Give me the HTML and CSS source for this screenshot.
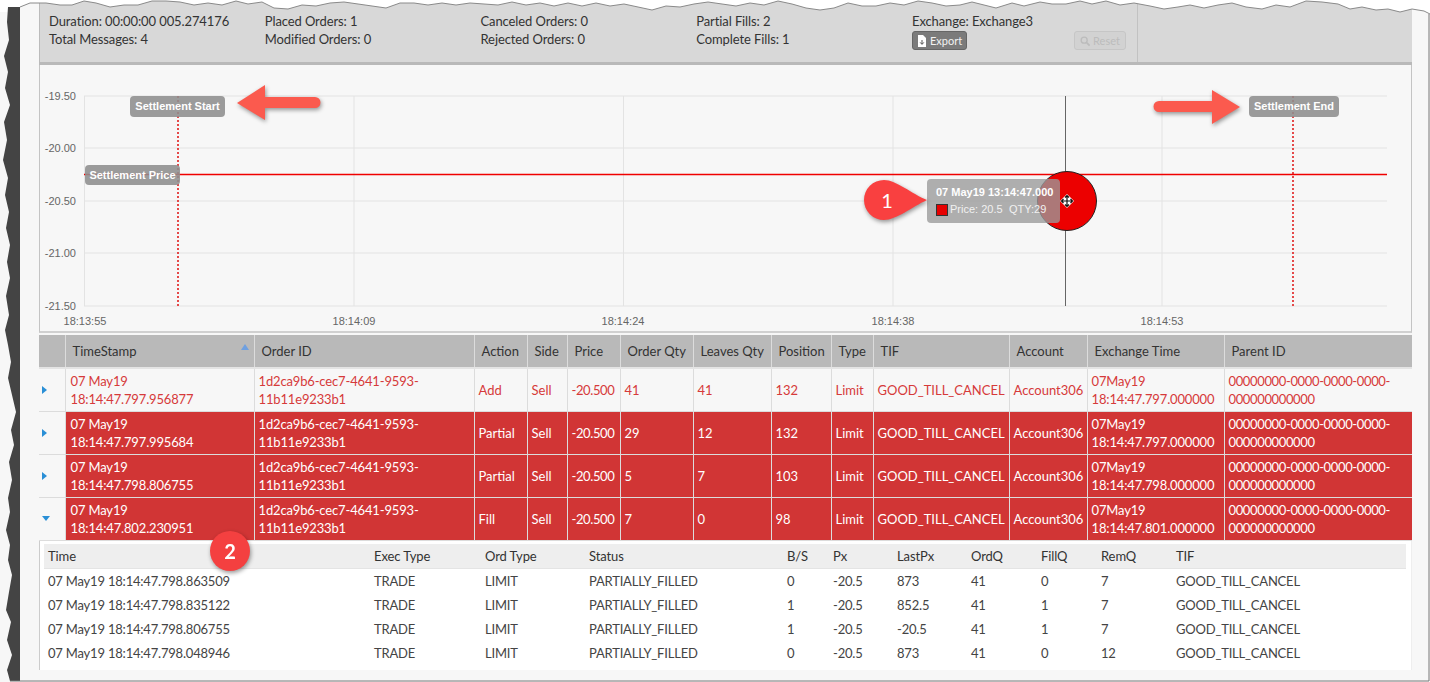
FILE: index.html
```html
<!DOCTYPE html>
<html lang="en">
<head>
  <meta charset="UTF-8" />
  <title>Order Timeline</title>
  <link rel="stylesheet" href="styles.css">
</head>
<body>
  <div class="shot">
    <div class="panel">
      <div class="summary">
        <div class="stat"><p>Duration: 00:00:00 005.274176</p><p>Total Messages: 4</p></div>
        <div class="stat"><p>Placed Orders: 1</p><p>Modified Orders: 0</p></div>
        <div class="stat"><p>Canceled Orders: 0</p><p>Rejected Orders: 0</p></div>
        <div class="stat"><p>Partial Fills: 2</p><p>Complete Fills: 1</p></div>
        <div class="stat stat-actions">
          <p>Exchange: Exchange3</p>
          <div class="actions">
            <button class="btn btn-export">
              <svg class="btn-icon" viewBox="0 0 10 12"><path d="M1 0h5l3 3v9H1z" fill="#fff"/><path d="M5 5v4M3.2 7.4 5 9.4l1.800-2" stroke="#555" fill="none"/></svg>
              Export
            </button>
            <button class="btn btn-reset">
              <svg class="btn-icon" viewBox="0 0 12 12"><circle cx="5" cy="5" r="3.600" fill="none" stroke="#bcbcbc" stroke-width="1.600"/><path d="m8 8 3.500 3.500" stroke="#bcbcbc" stroke-width="2"/></svg>
              Reset
            </button>
          </div>
        </div>
      </div>

      <svg class="chart" viewBox="1 0 1371 266">
        <g class="grid">
          <path d="M45 31H1348M45 83H1348M45 136H1348M45 188H1348M45 241H1348"/>
          <path d="M45.500 31V241M315 31V241M584.500 31V241M854 31V241M1123 31V241"/>
        </g>
        <g class="axis">
          <text x="37" y="35" text-anchor="end">-19.50</text>
          <text x="37" y="87" text-anchor="end">-20.00</text>
          <text x="37" y="140" text-anchor="end">-20.50</text>
          <text x="37" y="192" text-anchor="end">-21.00</text>
          <text x="37" y="245" text-anchor="end">-21.50</text>
          <text x="46" y="260" text-anchor="middle">18:13:55</text>
          <text x="315" y="260" text-anchor="middle">18:14:09</text>
          <text x="584" y="260" text-anchor="middle">18:14:24</text>
          <text x="854" y="260" text-anchor="middle">18:14:38</text>
          <text x="1123" y="260" text-anchor="middle">18:14:53</text>
        </g>
        <path class="price-line" d="M45 109.500H1348"/>
        <path class="marker-line" d="M139 31V241M1254 31V241"/>
        <path class="cross-line" d="M1026.500 31V241"/>
        <circle class="point" cx="1028" cy="136" r="29.500"/>

        <rect class="flag" x="91" y="31" width="95" height="21" rx="4"/>
        <text class="flag-text" x="138.500" y="44.500" text-anchor="middle">Settlement Start</text>
        <rect class="flag" x="46" y="100" width="95" height="20" rx="4"/>
        <text class="flag-text" x="93.500" y="113.500" text-anchor="middle">Settlement Price</text>
        <rect class="flag" x="1210" y="31" width="90" height="21" rx="4"/>
        <text class="flag-text" x="1255" y="44.500" text-anchor="middle">Settlement End</text>

        <rect class="tip" x="888" y="114" width="133" height="44" rx="4"/>
        <text class="tip-title" x="897" y="131">07 May19 13:14:47.000</text>
        <rect class="tip-swatch" x="897.500" y="139.500" width="11" height="11"/>
        <text class="tip-text" x="911" y="148">Price: 20.5</text>
        <text class="tip-text" x="970" y="148">QTY:29</text>

        <path class="cursor-back" d="M1028 129l7 7-7 7-7-7z"/>
        <path class="cursor" d="M1028 131v10M1023 136h10M1026 132.500l2-2 2 2M1026 139.500l2 2 2-2M1024.500 134l-2 2 2 2M1031.500 134l2 2-2 2"/>

        <path class="callout-arrow" d="M198 38 226 20V32H276a5.500 5.500 0 0 1 0 11H226V55z"/>
        <path class="callout-arrow" d="M1201 42 1173 25V36H1120a5.500 5.500 0 0 0 0 11H1173V59z"/>
        <path class="callout-pin" d="M845 115c12 0 28 14 43 20-15 7-31 20-43 20a20 20 0 0 1 0-40z"/>
        <text class="callout-num" x="848" y="143" text-anchor="middle">1</text>
      </svg>

      <table class="orders">
        <colgroup>
          <col class="c-exp"><col class="c-stamp"><col class="c-id"><col class="c-action"><col class="c-side"><col class="c-price"><col class="c-oqty"><col class="c-lqty"><col class="c-pos"><col class="c-type"><col class="c-tif"><col class="c-acct"><col class="c-xtime"><col class="c-parent">
        </colgroup>
        <thead>
          <tr><th></th><th class="sorted">TimeStamp</th><th>Order ID</th><th>Action</th><th>Side</th><th>Price</th><th>Order Qty</th><th>Leaves Qty</th><th>Position</th><th>Type</th><th>TIF</th><th>Account</th><th>Exchange Time</th><th>Parent ID</th></tr>
        </thead>
        <tbody>
          <tr class="row-open">
            <td class="exp"><span class="caret"></span></td><td>07 May19<br>18:14:47.797.956877</td><td>1d2ca9b6-cec7-4641-9593-<br>11b11e9233b1</td><td>Add</td><td>Sell</td><td>-20.500</td><td>41</td><td>41</td><td>132</td><td>Limit</td><td>GOOD_TILL_CANCEL</td><td>Account306</td><td>07May19<br>18:14:47.797.000000</td><td>00000000-0000-0000-0000-<br>000000000000</td>
          </tr>
          <tr class="row-hit">
            <td class="exp"><span class="caret"></span></td><td>07 May19<br>18:14:47.797.995684</td><td>1d2ca9b6-cec7-4641-9593-<br>11b11e9233b1</td><td>Partial</td><td>Sell</td><td>-20.500</td><td>29</td><td>12</td><td>132</td><td>Limit</td><td>GOOD_TILL_CANCEL</td><td>Account306</td><td>07May19<br>18:14:47.797.000000</td><td>00000000-0000-0000-0000-<br>000000000000</td>
          </tr>
          <tr class="row-hit">
            <td class="exp"><span class="caret"></span></td><td>07 May19<br>18:14:47.798.806755</td><td>1d2ca9b6-cec7-4641-9593-<br>11b11e9233b1</td><td>Partial</td><td>Sell</td><td>-20.500</td><td>5</td><td>7</td><td>103</td><td>Limit</td><td>GOOD_TILL_CANCEL</td><td>Account306</td><td>07May19<br>18:14:47.798.000000</td><td>00000000-0000-0000-0000-<br>000000000000</td>
          </tr>
          <tr class="row-hit">
            <td class="exp"><span class="caret caret-down"></span></td><td>07 May19<br>18:14:47.802.230951</td><td>1d2ca9b6-cec7-4641-9593-<br>11b11e9233b1</td><td>Fill</td><td>Sell</td><td>-20.500</td><td>7</td><td>0</td><td>98</td><td>Limit</td><td>GOOD_TILL_CANCEL</td><td>Account306</td><td>07May19<br>18:14:47.801.000000</td><td>00000000-0000-0000-0000-<br>000000000000</td>
          </tr>
        </tbody>
      </table>

      <div class="detail">
        <table class="execs">
          <colgroup>
            <col class="e-time"><col class="e-type"><col class="e-ord"><col class="e-status"><col class="e-bs"><col class="e-px"><col class="e-last"><col class="e-oq"><col class="e-fq"><col class="e-rq"><col class="e-tif">
          </colgroup>
          <thead>
            <tr><th>Time</th><th>Exec Type</th><th>Ord Type</th><th>Status</th><th>B/S</th><th>Px</th><th>LastPx</th><th>OrdQ</th><th>FillQ</th><th>RemQ</th><th>TIF</th></tr>
          </thead>
          <tbody>
            <tr><td>07 May19 18:14:47.798.863509</td><td>TRADE</td><td>LIMIT</td><td>PARTIALLY_FILLED</td><td>0</td><td>-20.5</td><td>873</td><td>41</td><td>0</td><td>7</td><td>GOOD_TILL_CANCEL</td></tr>
            <tr><td>07 May19 18:14:47.798.835122</td><td>TRADE</td><td>LIMIT</td><td>PARTIALLY_FILLED</td><td>1</td><td>-20.5</td><td>852.5</td><td>41</td><td>1</td><td>7</td><td>GOOD_TILL_CANCEL</td></tr>
            <tr><td>07 May19 18:14:47.798.806755</td><td>TRADE</td><td>LIMIT</td><td>PARTIALLY_FILLED</td><td>1</td><td>-20.5</td><td>-20.5</td><td>41</td><td>1</td><td>7</td><td>GOOD_TILL_CANCEL</td></tr>
            <tr><td>07 May19 18:14:47.798.048946</td><td>TRADE</td><td>LIMIT</td><td>PARTIALLY_FILLED</td><td>0</td><td>-20.5</td><td>873</td><td>41</td><td>0</td><td>12</td><td>GOOD_TILL_CANCEL</td></tr>
          </tbody>
        </table>
      </div>
    </div>

    <div class="badge">2</div>

    <!-- torn screenshot edge, sits over everything -->
    <svg class="torn" viewBox="0 0 1430 682" width="1430" height="682">
      <path class="torn-paper" d="M0 0H1430V14L1424 11 1412 9 1400 12 1388 9 1376 10 1362 7 1350 9 1338 4 1322 2 1306 1 1290 7 1276 5 1262 9 1246 7 1232 3 1218 5 1204 8 1190 5 1178 7 1164 9 1150 6 1134 3 1120 5 1106 1 1092 4 1080 1 1066 4 1052 4 1040 2 1024 6 1012 3 996 8 984 5 972 2 960 5 946 6 932 3 918 1 904 5 890 3 876 6 862 6 848 3 834 8 820 10 806 8 792 4 778 1 764 5 750 3 736 6 722 4 708 2 694 4 680 7 666 6 652 10 638 7 624 4 610 6 596 3 582 6 568 3 554 6 540 3 526 5 512 2 498 5 484 4 470 3 456 5 442 3 428 5 414 3 400 3 386 8 372 6 358 4 344 2 330 3 316 6 302 5 288 9 274 8 262 2 248 4 236 1 222 5 208 3 194 5 180 2 166 1 152 1 138 5 124 5 110 7 96 3 84 1 72 5 60 5 46 3 30 3 20 7 8 12 0 12z"/>
      <path class="torn-line" d="M1430 14 1424 11 1412 9 1400 12 1388 9 1376 10 1362 7 1350 9 1338 4 1322 2 1306 1 1290 7 1276 5 1262 9 1246 7 1232 3 1218 5 1204 8 1190 5 1178 7 1164 9 1150 6 1134 3 1120 5 1106 1 1092 4 1080 1 1066 4 1052 4 1040 2 1024 6 1012 3 996 8 984 5 972 2 960 5 946 6 932 3 918 1 904 5 890 3 876 6 862 6 848 3 834 8 820 10 806 8 792 4 778 1 764 5 750 3 736 6 722 4 708 2 694 4 680 7 666 6 652 10 638 7 624 4 610 6 596 3 582 6 568 3 554 6 540 3 526 5 512 2 498 5 484 4 470 3 456 5 442 3 428 5 414 3 400 3 386 8 372 6 358 4 344 2 330 3 316 6 302 5 288 9 274 8 262 2 248 4 236 1 222 5 208 3 194 5 180 2 166 1 152 1 138 5 124 5 110 7 96 3 84 1 72 5 60 5 46 3 30 3 20 7"/>
      <path class="torn-band" d="M8 7H20V681H10L7 670 12 655 7 640 11 622 6 610 9 592 12 575 8 560 10 545 6 530 10 512 8 498 12 480 9 462 14 445 11 430 16 412 12 395 8 378 11 362 8 345 5 330 9 315 6 296 10 278 7 262 10 245 6 228 9 212 5 195 8 178 3 160 7 140 4 122 10 105 5 88 8 72 4 56 9 40 7 22z"/>
      <path class="torn-frame" d="M1429 14V681H10"/>
    </svg>
  </div>
</body>
</html>
```

FILE: styles.css
```css
* { margin: 0; padding: 0; box-sizing: border-box; }
body {
  font-family: Lato, "Open Sans", sans-serif;
  background: #f7f7f7;
  overflow: hidden;
}
.shot {
  position: relative;
  width: 1430px;
  height: 682px;
  padding-left: 39px;
  overflow: hidden;
}
.panel { width: 1373px; }

/* summary bar */
.summary {
  display: flex;
  height: 65px;
  padding: 12px 0 0 9px;
  background: #d8d8d8;
  border-bottom: 3px solid #b9b9b9;
  border-left: 1px solid #bbb;
  color: #333;
  font-size: 13px;
  line-height: 18px;
  letter-spacing: -.1px;
}
.stat { width: 215.750px; }
.stat-actions {
  width: 226px;
  height: 62px;
  margin-top: -12px;
  padding-top: 12px;
  border-right: 1px solid #c2c2c2;
}
.actions {
  display: flex;
  gap: 107px;
  margin-top: 1px;
}
.btn {
  display: flex;
  align-items: center;
  justify-content: center;
  gap: 3px;
  height: 19px;
  border-radius: 3px;
  font: 11px Lato, sans-serif;
}
.btn-icon { width: 10px; height: 12px; }
.btn-export {
  width: 55px;
  background: #7b7b7b;
  border: 1px solid #666;
  color: #f2f2f2;
}
.btn-reset {
  width: 52px;
  background: #d2d2d2;
  border: 1px solid #c6c6c6;
  color: #bcbcbc;
}

/* chart */
.chart {
  display: block;
  box-sizing: content-box;
  width: 1371px;
  height: 266px;
  margin-bottom: 2px;
  background: #f7f7f7;
  border-left: 1px solid #c4c4c4;
  border-right: 1px solid #c4c4c4;
  border-bottom: 2px solid #d0d0d0;
}
.grid path { stroke: #e3e3e3; fill: none; }
.axis text {
  font: 11px "Liberation Sans", sans-serif;
  fill: #666;
}
.price-line { stroke: #f00000; stroke-width: 1.600; fill: none; }
.marker-line { stroke: #e01010; stroke-width: 1.500; stroke-dasharray: 2 2; fill: none; }
.cross-line { stroke: #666; fill: none; }
.point { fill: #ec0000; stroke: #222; }
.flag { fill: #8e8e8e; fill-opacity: .88; }
.flag-text {
  font: bold 11px "Liberation Sans", sans-serif;
  fill: #fff;
}
.tip { fill: #9a9a9a; fill-opacity: .78; }
.tip-title {
  font: bold 11px "Liberation Sans", sans-serif;
  fill: #fff;
}
.tip-text {
  font: 11px "Liberation Sans", sans-serif;
  fill: #f1f1f1;
}
.tip-swatch { fill: #e60000; stroke: #333; }
.cursor-back { fill: #fff; }
.cursor { stroke: #111; stroke-width: 1.200; fill: none; }
.callout-arrow, .callout-pin, .badge {
  filter: drop-shadow(1px 2px 2px rgba(0, 0, 0, .4));
}
.callout-arrow { fill: #fb5a4e; }
.callout-pin { fill: #f94040; }
.callout-num {
  font: 20px Lato, sans-serif;
  fill: #fff;
}

/* orders grid */
.orders, .execs {
  width: 100%;
  border-collapse: collapse;
  table-layout: fixed;
}
.c-exp { width: 26px; }
.c-stamp { width: 189px; }
.c-id { width: 220px; }
.c-action { width: 53px; }
.c-side { width: 40px; }
.c-price { width: 53px; }
.c-oqty { width: 73px; }
.c-lqty { width: 78px; }
.c-pos { width: 60px; }
.c-type { width: 42px; }
.c-tif { width: 136px; }
.c-acct { width: 78px; }
.c-xtime { width: 137px; }
.c-parent { width: 188px; }
.orders th {
  height: 33px;
  padding-left: 7px;
  background: #b9b9b9;
  border-left: 1px solid #dcdcdc;
  border-right: 1px solid #dcdcdc;
  border-bottom: 2px solid #e4e4e4;
  color: #333;
  font-size: 13px;
  font-weight: 400;
  text-align: left;
  white-space: nowrap;
}
.orders th:first-child { border-left: 0; }
.orders th:last-child { border-right: 0; }
.sorted { position: relative; }
.sorted::after {
  content: "";
  position: absolute;
  top: 9px;
  right: 5px;
  border: 4px solid transparent;
  border-top: 0;
  border-bottom: 6px solid #6fa0e0;
}
.orders td {
  height: 43px;
  padding-left: 4px;
  border: 1px solid #dcdcdc;
  border-top: 0;
  font-size: 13px;
  line-height: 18px;
  white-space: nowrap;
  overflow: hidden;
}
.orders td:nth-child(2) { padding-left: 5px; letter-spacing: -.15px; }
.orders td:nth-child(3),
.orders td:nth-child(13) { letter-spacing: -.15px; }
.orders td:nth-child(6) { letter-spacing: -.4px; }
.orders td:nth-child(14) { letter-spacing: -.36px; }
.orders td:last-child { border-right: 0; }
.orders td.exp {
  padding-left: 3px;
  background: #f7f7f7;
  border-left: 0;
}
.row-open td { background: #f7f7f7; color: #d63a3a; }
.row-hit td { background: #d13535; color: #fff; }
.caret {
  display: block;
  width: 0;
  border: 4px solid transparent;
  border-left: 5px solid #2a8fd6;
  border-right: 0;
}
.caret-down {
  border: 4px solid transparent;
  border-top: 5px solid #2a8fd6;
  border-bottom: 0;
}

/* executions under the expanded row */
.detail {
  height: 129px;
  padding: 3px 5px 0 4px;
  background: #fff;
  border-left: 1px solid #ccc;
  border-right: 1px solid #eee;
}
.execs th {
  height: 25px;
  padding-left: 4px;
  background: #eeeeee;
  border-bottom: 1px solid #e4e4e4;
  color: #333;
  font-size: 13px;
  font-weight: 400;
  letter-spacing: -.1px;
  text-align: left;
}
.execs td {
  height: 24px;
  padding-left: 4px;
  color: #444;
  font-size: 13px;
  letter-spacing: -.2px;
  white-space: nowrap;
}
.e-time { width: 326px; }
.e-type { width: 111px; }
.e-ord { width: 104px; }
.e-status { width: 198px; }
.e-bs { width: 46px; }
.e-px { width: 64px; }
.e-last { width: 74px; }
.e-oq { width: 70px; }
.e-fq { width: 60px; }
.e-rq { width: 75px; }

/* numbered callout over the table */
.badge {
  position: absolute;
  left: 210px;
  top: 531px;
  width: 40px;
  height: 40px;
  border-radius: 50%;
  background: #f44040;
  color: #fff;
  font-size: 20px;
  font-weight: 700;
  line-height: 40px;
  text-align: center;
}

.torn {
  position: absolute;
  left: 0;
  top: 0;
  pointer-events: none;
}
.torn-paper { fill: #fff; }
.torn-line { fill: none; stroke: #8a8a8a; }
.torn-band { fill: #444; }
.torn-frame { fill: none; stroke: #777; }
```
